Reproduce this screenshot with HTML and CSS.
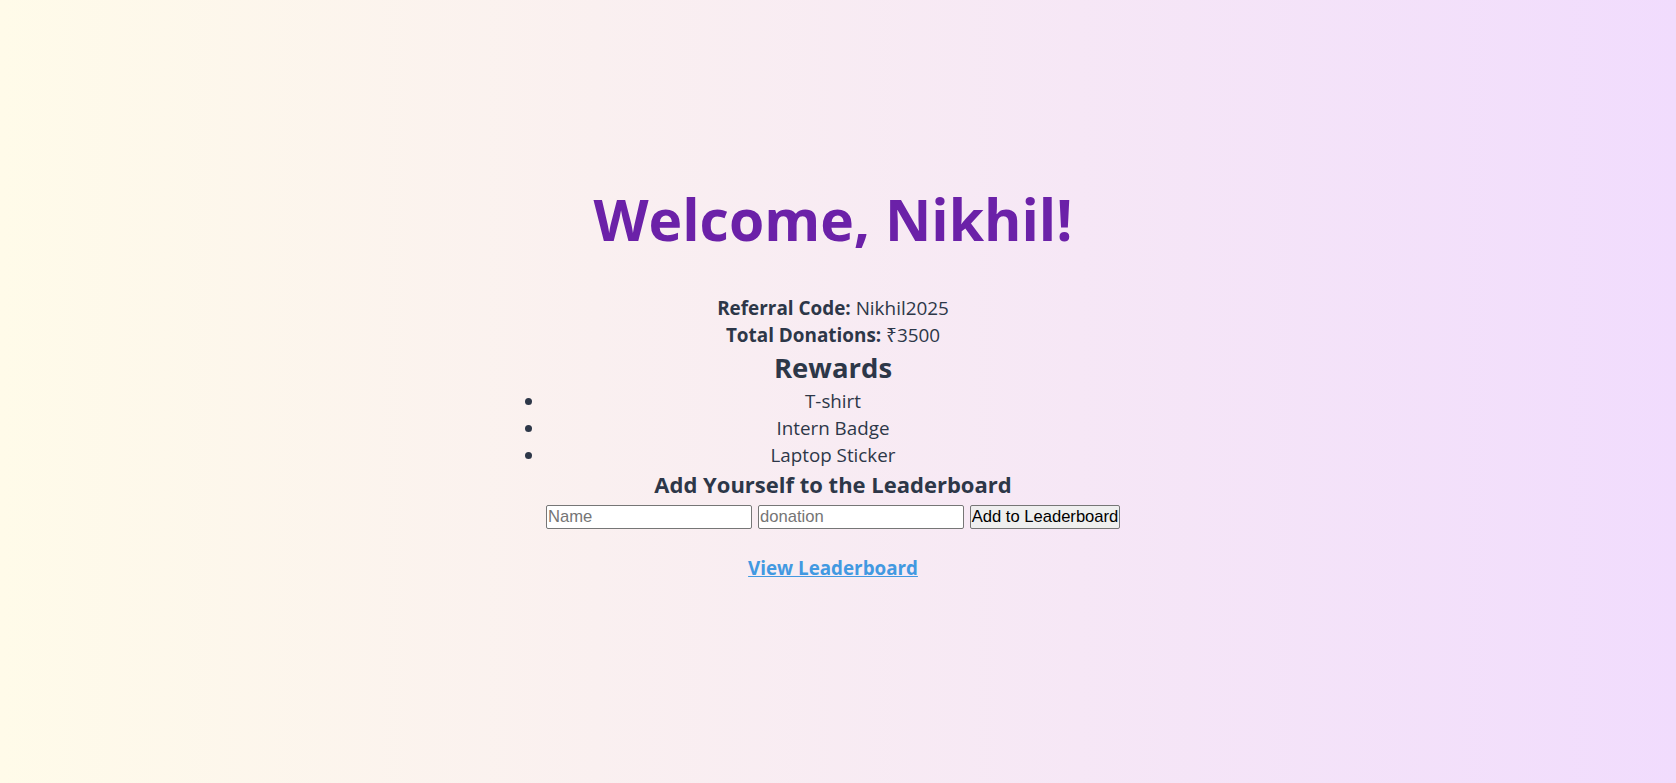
FILE: index.html
```html
<!DOCTYPE html>
<html lang="en">
<head>
<meta charset="utf-8">
<title>Welcome</title>
<link rel="stylesheet" href="styles.css">
</head>
<body>
<div class="page">
  <main class="card">
    <h1 class="title">Welcome, Nikhil!</h1>
    <p class="line"><strong>Referral Code:</strong> Nikhil2025</p>
    <p class="line"><strong>Total Donations:</strong> ₹3500</p>
    <h2 class="rewards-title">Rewards</h2>
    <ul class="rewards">
      <li>T-shirt</li>
      <li>Intern Badge</li>
      <li>Laptop Sticker</li>
    </ul>
    <h3 class="add-title">Add Yourself to the Leaderboard</h3>
    <form class="add-form">
      <input class="field" type="text" placeholder="Name">
      <input class="field" type="text" placeholder="donation">
      <button class="btn" type="button">Add to Leaderboard</button>
    </form>
    <p class="link-row"><a class="link" href="#">View Leaderboard</a></p>
  </main>
</div>
</body>
</html>
```
FILE: styles.css
```css
html, body {
  margin: 0;
  padding: 0;
}
body {
  background: linear-gradient(to right, #fffbe9, #f1dcfd);
  min-height: 100vh;
  font-family: "Open Sans", "Noto Sans", sans-serif;
  color: #2d3748;
}
.page {
  min-height: 100vh;
  box-sizing: border-box;
  padding: 175px 10px 0 0;
}
.card {
  width: 576px;
  margin: 0 auto;
  text-align: center;
}
.title {
  margin: 0 0 32px;
  font-size: 57px;
  line-height: 88px;
  font-weight: 700;
  color: #6b21a8;
}
.line {
  margin: 0;
  font-size: 18.9px;
  line-height: 26.67px;
}
.line strong {
  font-weight: 700;
}
.rewards-title {
  margin: 0;
  font-size: 27.5px;
  line-height: 40px;
  font-weight: 700;
}
.rewards {
  margin: 0;
  padding: 0;
  list-style: disc outside;
  font-size: 18.8px;
  line-height: 26.67px;
}
.add-title {
  margin: 0;
  font-size: 22px;
  line-height: 32px;
  font-weight: 700;
}
.add-form {
  margin: 5px 0 0;
  display: flex;
  justify-content: center;
  gap: 6px;
}
.field {
  box-sizing: border-box;
  width: 206px;
  height: 24px;
  margin: 0;
  padding: 1px 1px;
  border: 1px solid #767676;
  border-radius: 2px;
  background: #fff;
  font-family: "Liberation Sans", Arial, sans-serif;
  font-size: 16.6px;
  color: #000;
}
.field::placeholder {
  color: #757575;
}
.btn {
  box-sizing: border-box;
  width: 150px;
  height: 24px;
  margin: 0;
  padding: 0;
  border: 1px solid #767676;
  border-radius: 2px;
  background: #efefef;
  font-family: "Liberation Sans", Arial, sans-serif;
  font-size: 16.6px;
  color: #000;
  white-space: nowrap;
}
.link-row {
  margin: 26px 0 0;
  font-size: 18.8px;
  line-height: 26.67px;
}
.link {
  color: #4299e1;
  font-weight: 700;
  text-decoration: underline;
}
```
